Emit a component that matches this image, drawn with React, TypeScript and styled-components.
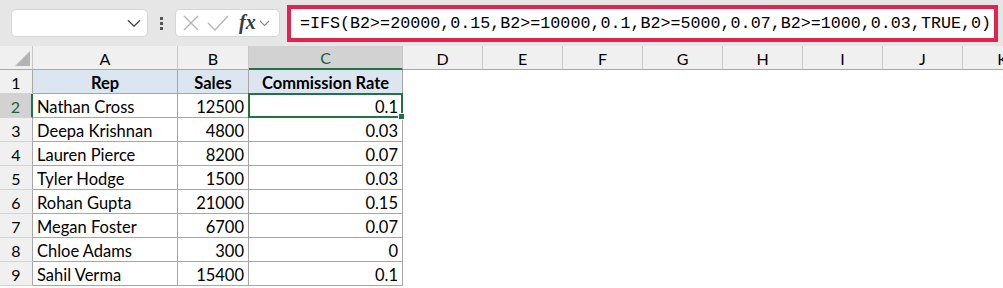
import styled, { createGlobalStyle } from "styled-components";

const GlobalStyle = createGlobalStyle`
  html, body {
    margin: 0;
    padding: 0;
    background: #ffffff;
    overflow: hidden;
  }
`;

const formula = "=IFS(B2>=20000,0.15,B2>=10000,0.1,B2>=5000,0.07,B2>=1000,0.03,TRUE,0)";

const colWidths = [145, 71, 154, 80, 80, 80, 80, 80, 80, 80, 80];
const letters = ["A", "B", "C", "D", "E", "F", "G", "H", "I", "J", "K"];

const rows = [
  ["Nathan Cross", "12500", "0.1"],
  ["Deepa Krishnan", "4800", "0.03"],
  ["Lauren Pierce", "8200", "0.07"],
  ["Tyler Hodge", "1500", "0.03"],
  ["Rohan Gupta", "21000", "0.15"],
  ["Megan Foster", "6700", "0.07"],
  ["Chloe Adams", "300", "0"],
  ["Sahil Verma", "15400", "0.1"],
];

const Chevron = ({ size = 14 }: { size?: number }) => (
  <svg width={size} height={size * 0.6} viewBox="0 0 14 8">
    <polyline points="1,1 7,7 13,1" fill="none" stroke="#444" strokeWidth="1.3" />
  </svg>
);

export default function App() {
  return (
    <Page>
      <GlobalStyle />
      <Toolbar>
        <NameBox>
          <Chevron />
        </NameBox>
        <Dots>
          <span />
          <span />
          <span />
        </Dots>
        <FxBox>
          <svg width="16" height="16" viewBox="0 0 16 16">
            <path d="M1 1 L15 15 M15 1 L1 15" stroke="#b5b5b5" strokeWidth="1.4" fill="none" />
          </svg>
          <svg width="22" height="16" viewBox="0 0 22 16">
            <polyline points="1,8 8,15 21,1" stroke="#b5b5b5" strokeWidth="1.4" fill="none" />
          </svg>
          <FxLabel>fx</FxLabel>
          <SmallChevron>
            <svg width="11" height="7" viewBox="0 0 11 7">
              <polyline points="1,1 5.5,5.5 10,1" fill="none" stroke="#8a8a8a" strokeWidth="1.1" />
            </svg>
          </SmallChevron>
        </FxBox>
        <FormulaBox>{formula}</FormulaBox>
      </Toolbar>

      <Sheet>
        <Corner>
          <Triangle />
        </Corner>
        {letters.map((l) => (
          <ColHead key={l} $selected={l === "C"}>
            {l}
          </ColHead>
        ))}

        <RowHead>1</RowHead>
        <Cell $table $fill $bold $align="center">Rep</Cell>
        <Cell $table $fill $bold $align="center">Sales</Cell>
        <Cell $table $fill $bold $align="center">Commission Rate</Cell>
        {letters.slice(3).map((l) => (
          <Cell key={l} />
        ))}

        {rows.map((r, i) => (
          <Row key={i} n={i + 2} data={r} />
        ))}
      </Sheet>
    </Page>
  );
}

const Row = ({ n, data }: { n: number; data: string[] }) => (
  <>
    <RowHead $selected={n === 2}>{n}</RowHead>
    <Cell $table $align="left">{data[0]}</Cell>
    <Cell $table $align="right">{data[1]}</Cell>
    <Cell $table $align="right" $active={n === 2}>
      {data[2]}
    </Cell>
    {letters.slice(3).map((l) => (
      <Cell key={l} />
    ))}
  </>
);

const Page = styled.div`
  width: 1003px;
  height: 288px;
  overflow: hidden;
  font-family: Lato, "Liberation Sans", sans-serif;
`;

const Toolbar = styled.div`
  display: flex;
  align-items: center;
  height: 46px;
  background: #e6e6e6;
  padding-left: 11px;
  box-sizing: border-box;
`;

const NameBox = styled.div`
  width: 137px;
  height: 28px;
  box-sizing: border-box;
  background: #fff;
  border: 1px solid #d6d6d6;
  border-radius: 5px;
  display: flex;
  align-items: center;
  justify-content: flex-end;
  padding-right: 6px;
`;

const Dots = styled.div`
  width: 27px;
  display: flex;
  flex-direction: column;
  align-items: center;
  gap: 2px;

  span {
    width: 3px;
    height: 3px;
    background: #555;
  }
`;

const FxBox = styled.div`
  width: 105px;
  height: 28px;
  box-sizing: border-box;
  background: #fff;
  border: 1px solid #d6d6d6;
  border-radius: 5px;
  display: flex;
  align-items: center;
  padding-left: 7px;
  gap: 8px;
`;

const FxLabel = styled.span`
  font-family: "Liberation Serif", serif;
  font-style: italic;
  font-weight: 700;
  font-size: 20px;
  color: #3a3a3a;
  margin-left: 2px;
  margin-top: -2px;
`;

const SmallChevron = styled.span`
  display: flex;
  margin-left: -5px;
`;

const FormulaBox = styled.div`
  margin-left: 7px;
  width: 711px;
  height: 37px;
  box-sizing: border-box;
  background: #fff;
  border: 4px solid #e3234f;
  display: flex;
  align-items: center;
  padding-left: 9px;
  font-family: "Liberation Mono", "DejaVu Sans Mono", monospace;
  font-size: 16.7px;
  color: #000;
  white-space: nowrap;
`;

const Sheet = styled.div`
  display: grid;
  grid-template-columns: 33px ${colWidths.map((w) => `${w}px`).join(" ")};
  grid-template-rows: 24px;
  grid-auto-rows: 24px;
`;

const Corner = styled.div`
  background: #f0f0f0;
  border-right: 1px solid #c8c8c8;
  border-bottom: 1px solid #a8a8a8;
  box-sizing: border-box;
  display: flex;
  align-items: flex-end;
  justify-content: flex-end;
  padding: 0 2px 3px 0;
`;

const Triangle = styled.div`
  width: 0;
  height: 0;
  border-left: 15px solid transparent;
  border-bottom: 15px solid #b4b4b4;
`;

const ColHead = styled.div<{ $selected?: boolean }>`
  background: ${(p) => (p.$selected ? "#d2d2d2" : "#f0f0f0")};
  border-right: 1px solid #c8c8c8;
  border-bottom: ${(p) => (p.$selected ? "2px solid #217346" : "1px solid #a8a8a8")};
  box-sizing: border-box;
  display: flex;
  align-items: center;
  justify-content: center;
  padding-top: 1px;
  font-size: 16px;
  color: ${(p) => (p.$selected ? "#1d5e3a" : "#000")};
`;

const RowHead = styled.div<{ $selected?: boolean }>`
  background: ${(p) => (p.$selected ? "#d2d2d2" : "#f0f0f0")};
  border-right: ${(p) => (p.$selected ? "2px solid #217346" : "1px solid #a8a8a8")};
  border-bottom: 1px solid #d2d2d2;
  box-sizing: border-box;
  display: flex;
  align-items: center;
  justify-content: center;
  padding-top: 2px;
  font-size: 16px;
  color: ${(p) => (p.$selected ? "#1d5e3a" : "#000")};
`;

const Cell = styled.div<{
  $table?: boolean;
  $fill?: boolean;
  $bold?: boolean;
  $align?: "left" | "right" | "center";
  $active?: boolean;
}>`
  position: relative;
  box-sizing: border-box;
  background: ${(p) => (p.$fill ? "#dce6f1" : "#fff")};
  border-right: ${(p) => (p.$table ? "1px solid #a6a6a6" : "none")};
  border-bottom: ${(p) => (p.$table ? "1px solid #a6a6a6" : "none")};
  display: flex;
  align-items: center;
  justify-content: ${(p) =>
    p.$align === "right" ? "flex-end" : p.$align === "center" ? "center" : "flex-start"};
  padding: 2px 4px 0;
  font-size: 16.5px;
  font-weight: ${(p) => (p.$bold ? 700 : 400)};
  color: #000;
  white-space: nowrap;

  ${(p) =>
    p.$active &&
    `
    &::after {
      content: "";
      position: absolute;
      left: -1px;
      top: -1px;
      right: -1px;
      bottom: -1px;
      border: 2px solid #217346;
    }
    &::before {
      content: "";
      position: absolute;
      right: -3px;
      bottom: -3px;
      width: 5px;
      height: 5px;
      background: #217346;
      border: 1px solid #fff;
      z-index: 1;
    }
  `}
`;
